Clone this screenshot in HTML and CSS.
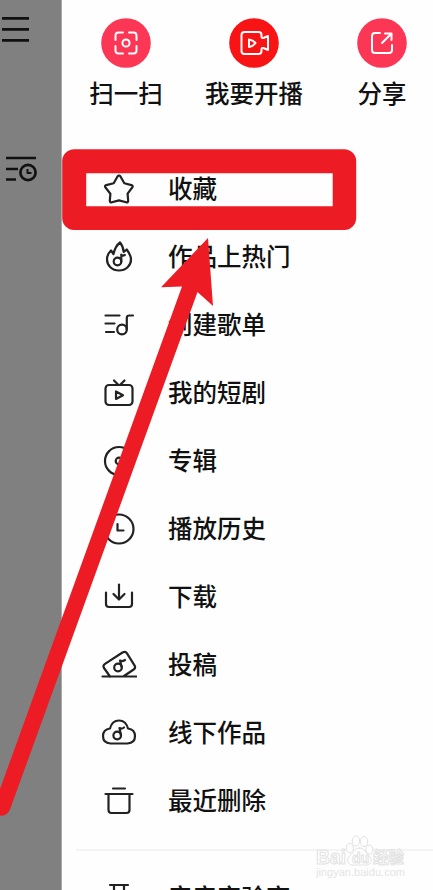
FILE: index.html
```html
<!DOCTYPE html>
<html lang="zh-CN">
<head>
  <meta charset="UTF-8">
  <title>更多</title>
  <link rel="stylesheet" href="styles.css">
</head>
<body>
  <div class="screen">
    <div class="backdrop">
      <svg class="menu-icon" width="28" height="28" viewBox="0 0 28 28">
        <path d="M0 2.300h27M0 13.300h27M0 24.300h27"/>
      </svg>
      <svg class="list-icon" width="32" height="28" viewBox="0 0 32 28">
        <path d="M0 3h30M0 14h12M0 24.500h10"/>
        <circle cx="22" cy="17.500" r="7.600"/>
        <path class="thin" d="M21.500 14v4h4"/>
      </svg>
    </div>

    <div class="drawer">
      <div class="actions">
        <div class="action">
          <svg width="50" height="50" viewBox="0 0 50 50">
            <circle class="pink" cx="25" cy="25" r="24.800"/>
            <path d="M14.500 22v-4.500q0-3 3-3H22M28 14.500h4.500q3 0 3 3V22M35.500 28v4.500q0 3-3 3H28M22 35.500h-4.500q-3 0-3-3V28"/>
            <circle cx="25" cy="25" r="3.600"/>
          </svg>
          <span>扫一扫</span>
        </div>
        <div class="action wide">
          <svg width="50" height="50" viewBox="0 0 50 50">
            <circle class="red" cx="25" cy="25" r="24.800"/>
            <path d="M15.500 14h14q3 0 3 3v1.500q0 2 2 1.500l4.500-2v14l-4.500-2q-2-.5-2 1.500V33q0 3-3 3h-14q-3 0-3-3V17q0-3 3-3zM20 21.500v7.500q4-.5 6.500-4-2.500-3-6.500-3.500z"/>
          </svg>
          <span>我要开播</span>
        </div>
        <div class="action">
          <svg width="50" height="50" viewBox="0 0 50 50">
            <circle class="pink" cx="25" cy="25" r="24.800"/>
            <path d="M23 15h-5q-3 0-3 3v14q0 3 3 3h14q3 0 3-3v-5M25 25l9.500-9.500M28 15.500h6.500V22"/>
          </svg>
          <span>分享</span>
        </div>
      </div>

      <div class="list">
        <div class="item">
          <svg class="icon" viewBox="0 0 36 36"><path d="M16.500 4.500q1.500-2 3 0l3.800 6.700 7.200 1.900q2 .7.700 2.400l-4.600 6.200.6 7.300q-.2 1.900-2 1.300L18 28.400l-7.200 1.900q-1.800.6-2-1.300l.6-7.300-4.900-6.200q-1.300-1.700.7-2.400l7.500-1.900z"/></svg>
          <span>收藏</span>
        </div>
        <div class="item">
          <svg class="icon" viewBox="0 0 36 36"><path d="M19 2.500c2.500 3 3.500 5.500 3.700 9.500l3-2.500c3 4 4.300 6.500 4.300 10 0 6-5 11-12 11S6 25.500 6 19.500c0-4 1.500-6.500 4-9l2.500 3.500c1-4.500 2.500-8.500 6.500-11.500z"/><circle cx="16.500" cy="21.500" r="3.800"/><path d="M20.300 21.500v-7q1 2 3.500.5"/></svg>
          <span>作品上热门</span>
        </div>
        <div class="item">
          <svg class="icon" viewBox="0 0 36 36"><path d="M4.500 7.500h14M4.500 15.500h9M5 24h8"/><circle cx="21" cy="21.500" r="4.800"/><path d="M25.800 21.500V10q0-2.500 2.500-2.500H32"/></svg>
          <span>创建歌单</span>
        </div>
        <div class="item">
          <svg class="icon" viewBox="0 0 36 36"><rect x="4.500" y="9" width="27" height="20" rx="3.500"/><path d="M13 4.500l4 4M23.500 4.500l-4 4M15 15.500v7.500l7-3.800z"/></svg>
          <span>我的短剧</span>
        </div>
        <div class="item">
          <svg class="icon" viewBox="0 0 36 36"><circle cx="18" cy="17" r="14"/><circle cx="18" cy="17" r="3.300"/></svg>
          <span>专辑</span>
        </div>
        <div class="item">
          <svg class="icon" viewBox="0 0 36 36"><circle cx="18" cy="17" r="14.500"/><path d="M16.500 12v6.500h6"/></svg>
          <span>播放历史</span>
        </div>
        <div class="item">
          <svg class="icon" viewBox="0 0 36 36"><path d="M5 12.500V24q0 3 3 3h20q3 0 3-3V12.500M18 4.500v14.500M12.500 14l5.500 5.500 5.500-5.500"/></svg>
          <span>下载</span>
        </div>
        <div class="item">
          <svg class="icon" viewBox="0 0 36 36"><path d="M1.500 28.500h34M9 28.500l-6-8.500q-1.500-2.500 1-4.200L21.500 4.500q3-1.500 4.500.8l7.500 12q1.500 2.500-.8 4.200L23 28"/><circle cx="17" cy="19.500" r="3.800"/><path d="M20.800 19.500L19 12.500q2 1.500 5-.5"/></svg>
          <span>投稿</span>
        </div>
        <div class="item">
          <svg class="icon" viewBox="0 0 36 36"><path d="M9.500 27.500q-7.500-.5-7.500-7.500 0-6.500 7-7.500Q11 4.500 18 4.500t9 8q7 1 7 7.500 0 7-7.500 7.500z"/><circle cx="16.200" cy="19.500" r="3.800"/><path d="M20 19.500l-1.500-7.500q2 1.500 4.500-.5"/></svg>
          <span>线下作品</span>
        </div>
        <div class="item">
          <svg class="icon" viewBox="0 0 36 36"><path d="M12 4.500h12M4.500 10h27M7.500 10v16q0 3 3 3h15q3 0 3-3V10"/></svg>
          <span>最近删除</span>
        </div>
      </div>

      <div class="divider"></div>
      <div class="item last">
        <svg class="icon" viewBox="0 0 36 36"><path d="M9 4h18M13 4v10L6 28h24l-7-14V4"/></svg>
        <span>音音实验室</span>
      </div>
    </div>

    <!-- marker box and arrow -->
    <svg class="marker" width="433" height="890" viewBox="0 0 433 890">
      <path class="frame" d="M74.200 149.200h270a12 12 0 0 1 12 12V218a12 12 0 0 1-12 12h-270a12 12 0 0 1-12-12v-56.800a12 12 0 0 1 12-12zm12 24v33h246.500v-33z"/>
      <path class="arrow" d="M208 238l5 68-15.500-14L10 809.500q-3 6.500-9 6.200l-1-.2V789L182 286.500l-21 .7z"/>
    </svg>

    <svg class="watermark" width="100" height="52" viewBox="0 0 100 52">
      <text class="mark-name" x="6" y="34" textLength="30" lengthAdjust="spacingAndGlyphs">Bai</text>
      <ellipse cx="40" cy="18" rx="3.500" ry="4.500"/>
      <ellipse cx="46" cy="11" rx="3.700" ry="5"/>
      <ellipse cx="54" cy="11.500" rx="3.700" ry="5"/>
      <ellipse cx="59.500" cy="19.500" rx="3.500" ry="4.500"/>
      <path d="M49.500 18c5 0 6 5 10 8 4 5 1 10-5 9h-10c-6 1-9-4-5-9 4-3 5-8 10-8z"/>
      <text class="mark-du" x="42" y="32.500">du</text>
      <text class="mark-cn" x="63" y="33">经验</text>
      <text class="mark-url" x="6" y="46" textLength="89">jingyan.baidu.com</text>
    </svg>
  </div>
</body>
</html>
```
FILE: styles.css
```css
body { margin: 0; background: #fff; font-family: "Liberation Sans", "Noto Sans CJK SC", sans-serif; }
.screen { position: relative; display: flex; width: 433px; height: 890px; overflow: hidden; }
svg { flex: none; fill: none; stroke-linecap: round; stroke-linejoin: round; }

.backdrop { box-sizing: border-box; width: 62px; flex: none; padding-top: 16px; background: #808080; border-right: 1px solid #aaa; }
.backdrop svg { display: block; stroke: #111; stroke-width: 2.7; stroke-linecap: butt; }
.menu-icon { margin-left: 2px; }
.list-icon { margin: 111px 0 0 6px; }
.backdrop .thin { stroke-width: 2; }

.drawer { flex: 1; background: #fefefe; color: #111; font-size: 24.5px; font-weight: 500; line-height: 36px; }
.actions { display: flex; height: 129px; padding: 18px 0 0 14px; }
.action { display: flex; flex-direction: column; align-items: center; width: 100px; }
.action.wide { width: 156px; }
.action svg { stroke: #fff; stroke-width: 2; margin-bottom: 9px; }
.action .pink { fill: #fc3756; stroke: none; }
.action .red { fill: #f81414; stroke: none; }

.list { padding-top: 9px; }
.item { display: flex; align-items: center; height: 68px; padding-left: 39px; }
.icon { width: 36px; height: 36px; margin-right: 31px; stroke: #222; stroke-width: 2.2; }
.divider { height: 2px; margin: 13px 0 0 14px; background: #f4f4f4; }
.item.last { height: 96px; }

.marker { position: absolute; left: 0; top: 0; }
.frame, .arrow { fill: #ed1c24; fill-rule: evenodd; }

.watermark { position: absolute; left: 310px; top: 830px; fill: #fff; stroke: #e2e2e2; stroke-width: 1; }
.mark-name { font-size: 20px; font-weight: 700; }
.mark-du { font-size: 14px; font-weight: 700; }
.mark-cn { font-size: 15.5px; font-weight: 700; }
.mark-url { fill: #e4e4e4; stroke: none; font-size: 11px; }
```
